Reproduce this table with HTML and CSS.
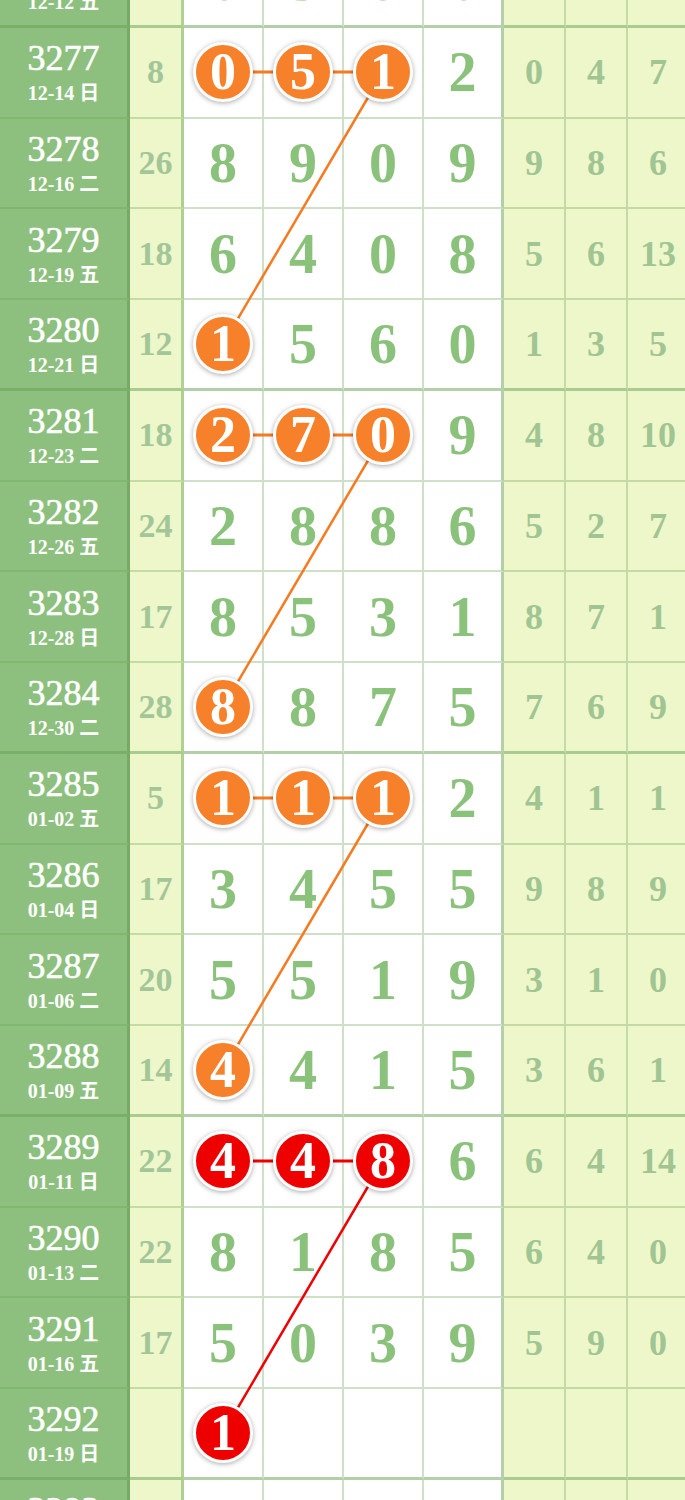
FILE: index.html
```html
<!DOCTYPE html>
<html lang="zh">
<head>
    <meta charset="UTF-8">
    <meta name="viewport" content="width=device-width, initial-scale=1.0">
    <title>走势图</title>
    <link rel="stylesheet" href="styles.css">
</head>
<body>
<div class="page">
<div class="chart">
    <!-- connecting lines, drawn under the balls -->
    <svg class="links" width="690" height="1634" viewBox="0 0 690 1634">
        <g stroke="#f47b22" stroke-width="3" fill="none">
            <line x1="223" y1="135" x2="383" y2="135"/>
            <line x1="383" y1="135" x2="223" y2="407" stroke-width="2.5"/>
            <line x1="223" y1="498" x2="383" y2="498"/>
            <line x1="383" y1="498" x2="223" y2="770" stroke-width="2.5"/>
            <line x1="223" y1="861" x2="383" y2="861"/>
            <line x1="383" y1="861" x2="223" y2="1133" stroke-width="2.5"/>
        </g>
        <g stroke="#ee0000" stroke-width="3" fill="none">
            <line x1="223" y1="1224" x2="383" y2="1224"/>
            <line x1="383" y1="1224" x2="223" y2="1496" stroke-width="2.5"/>
        </g>
    </svg>

    <div class="row end">
        <div class="issue"><span class="no">3276</span><span class="date">12-12 五</span></div>
        <div class="sum">15</div>
        <div class="num">6</div><div class="num">3</div><div class="num">0</div><div class="num last">6</div>
        <div class="dist">6</div><div class="dist">3</div><div class="dist">4</div>
    </div>

    <div class="row">
        <div class="issue"><span class="no">3277</span><span class="date">12-14 日</span></div>
        <div class="sum">8</div>
        <div class="num"><span class="ball orange">0</span></div>
        <div class="num"><span class="ball orange">5</span></div>
        <div class="num"><span class="ball orange">1</span></div>
        <div class="num last">2</div>
        <div class="dist">0</div><div class="dist">4</div><div class="dist">7</div>
    </div>
    <div class="row">
        <div class="issue"><span class="no">3278</span><span class="date">12-16 二</span></div>
        <div class="sum">26</div>
        <div class="num">8</div><div class="num">9</div><div class="num">0</div><div class="num last">9</div>
        <div class="dist">9</div><div class="dist">8</div><div class="dist">6</div>
    </div>
    <div class="row">
        <div class="issue"><span class="no">3279</span><span class="date">12-19 五</span></div>
        <div class="sum">18</div>
        <div class="num">6</div><div class="num">4</div><div class="num">0</div><div class="num last">8</div>
        <div class="dist">5</div><div class="dist">6</div><div class="dist">13</div>
    </div>
    <div class="row end">
        <div class="issue"><span class="no">3280</span><span class="date">12-21 日</span></div>
        <div class="sum">12</div>
        <div class="num"><span class="ball orange">1</span></div>
        <div class="num">5</div><div class="num">6</div><div class="num last">0</div>
        <div class="dist">1</div><div class="dist">3</div><div class="dist">5</div>
    </div>

    <div class="row">
        <div class="issue"><span class="no">3281</span><span class="date">12-23 二</span></div>
        <div class="sum">18</div>
        <div class="num"><span class="ball orange">2</span></div>
        <div class="num"><span class="ball orange">7</span></div>
        <div class="num"><span class="ball orange">0</span></div>
        <div class="num last">9</div>
        <div class="dist">4</div><div class="dist">8</div><div class="dist">10</div>
    </div>
    <div class="row">
        <div class="issue"><span class="no">3282</span><span class="date">12-26 五</span></div>
        <div class="sum">24</div>
        <div class="num">2</div><div class="num">8</div><div class="num">8</div><div class="num last">6</div>
        <div class="dist">5</div><div class="dist">2</div><div class="dist">7</div>
    </div>
    <div class="row">
        <div class="issue"><span class="no">3283</span><span class="date">12-28 日</span></div>
        <div class="sum">17</div>
        <div class="num">8</div><div class="num">5</div><div class="num">3</div><div class="num last">1</div>
        <div class="dist">8</div><div class="dist">7</div><div class="dist">1</div>
    </div>
    <div class="row end">
        <div class="issue"><span class="no">3284</span><span class="date">12-30 二</span></div>
        <div class="sum">28</div>
        <div class="num"><span class="ball orange">8</span></div>
        <div class="num">8</div><div class="num">7</div><div class="num last">5</div>
        <div class="dist">7</div><div class="dist">6</div><div class="dist">9</div>
    </div>

    <div class="row">
        <div class="issue"><span class="no">3285</span><span class="date">01-02 五</span></div>
        <div class="sum">5</div>
        <div class="num"><span class="ball orange">1</span></div>
        <div class="num"><span class="ball orange">1</span></div>
        <div class="num"><span class="ball orange">1</span></div>
        <div class="num last">2</div>
        <div class="dist">4</div><div class="dist">1</div><div class="dist">1</div>
    </div>
    <div class="row">
        <div class="issue"><span class="no">3286</span><span class="date">01-04 日</span></div>
        <div class="sum">17</div>
        <div class="num">3</div><div class="num">4</div><div class="num">5</div><div class="num last">5</div>
        <div class="dist">9</div><div class="dist">8</div><div class="dist">9</div>
    </div>
    <div class="row">
        <div class="issue"><span class="no">3287</span><span class="date">01-06 二</span></div>
        <div class="sum">20</div>
        <div class="num">5</div><div class="num">5</div><div class="num">1</div><div class="num last">9</div>
        <div class="dist">3</div><div class="dist">1</div><div class="dist">0</div>
    </div>
    <div class="row end">
        <div class="issue"><span class="no">3288</span><span class="date">01-09 五</span></div>
        <div class="sum">14</div>
        <div class="num"><span class="ball orange">4</span></div>
        <div class="num">4</div><div class="num">1</div><div class="num last">5</div>
        <div class="dist">3</div><div class="dist">6</div><div class="dist">1</div>
    </div>

    <div class="row">
        <div class="issue"><span class="no">3289</span><span class="date">01-11 日</span></div>
        <div class="sum">22</div>
        <div class="num"><span class="ball red">4</span></div>
        <div class="num"><span class="ball red">4</span></div>
        <div class="num"><span class="ball red">8</span></div>
        <div class="num last">6</div>
        <div class="dist">6</div><div class="dist">4</div><div class="dist">14</div>
    </div>
    <div class="row">
        <div class="issue"><span class="no">3290</span><span class="date">01-13 二</span></div>
        <div class="sum">22</div>
        <div class="num">8</div><div class="num">1</div><div class="num">8</div><div class="num last">5</div>
        <div class="dist">6</div><div class="dist">4</div><div class="dist">0</div>
    </div>
    <div class="row">
        <div class="issue"><span class="no">3291</span><span class="date">01-16 五</span></div>
        <div class="sum">17</div>
        <div class="num">5</div><div class="num">0</div><div class="num">3</div><div class="num last">9</div>
        <div class="dist">5</div><div class="dist">9</div><div class="dist">0</div>
    </div>
    <div class="row end">
        <div class="issue"><span class="no">3292</span><span class="date">01-19 日</span></div>
        <div class="sum"></div>
        <div class="num"><span class="ball red">1</span></div>
        <div class="num"></div><div class="num"></div><div class="num last"></div>
        <div class="dist"></div><div class="dist"></div><div class="dist"></div>
    </div>

    <div class="row">
        <div class="issue"><span class="no">3293</span><span class="date">01-21 二</span></div>
        <div class="sum"></div>
        <div class="num"></div><div class="num"></div><div class="num"></div><div class="num last"></div>
        <div class="dist"></div><div class="dist"></div><div class="dist"></div>
    </div>
</div>
</div>
</body>
</html>
```

FILE: styles.css
```css
body {
    margin: 0;
    background-color: #fff;
    font-family: "Liberation Serif", "Noto Sans CJK SC", serif;
}
.page {
    height: 1500px;
    overflow: hidden;
}
.chart {
    position: relative;
    width: 690px;
    margin-top: -63px;
}
.links {
    position: absolute;
    top: 0;
    left: 0;
    z-index: 1;
}
.row {
    display: grid;
    grid-template-columns: 130px 54px 80px 80px 80px 80px 62px 62px 62px;
    height: 90.75px;
}
.row > div {
    box-sizing: border-box;
    display: flex;
    align-items: center;
    justify-content: center;
    border-bottom: 2px solid rgba(105, 160, 85, 0.32);
    border-right: 2px solid rgba(105, 160, 85, 0.32);
    line-height: 1;
}
.row.end > div {
    border-bottom: 3px solid rgba(105, 160, 85, 0.5);
}
.issue {
    background-color: #8dc07e;
    color: #fff;
    flex-direction: column;
    gap: 6px;
    border-right: 3px solid rgba(80, 130, 60, 0.35) !important;
}
.issue .no {
    font-size: 36px;
    -webkit-text-stroke: 0.6px #fff;
}
.issue .date {
    font-size: 20px;
    font-weight: bold;
    line-height: 22px;
}
.sum {
    background-color: #eef7ca;
    color: #a3c699;
    font-size: 34px;
    font-weight: bold;
    border-right: 3px solid rgba(105, 160, 85, 0.45) !important;
}
.num {
    color: #8bc27b;
    font-size: 56px;
    font-weight: bold;
}
.num.last {
    border-right: 3px solid rgba(105, 160, 85, 0.5) !important;
}
.dist {
    background-color: #eef7ca;
    color: #a0c593;
    font-size: 36px;
    font-weight: bold;
}
.ball {
    position: relative;
    z-index: 2;
    box-sizing: border-box;
    width: 60px;
    height: 60px;
    border-radius: 50%;
    border: 3px solid #fff;
    box-shadow: 0 1px 5px rgba(0, 0, 0, 0.35);
    display: flex;
    align-items: center;
    justify-content: center;
    color: #fff;
    font-size: 52px;
    font-weight: bold;
}
.ball.orange {
    background-color: #f7812a;
}
.ball.red {
    background-color: #ee0000;
}
```
